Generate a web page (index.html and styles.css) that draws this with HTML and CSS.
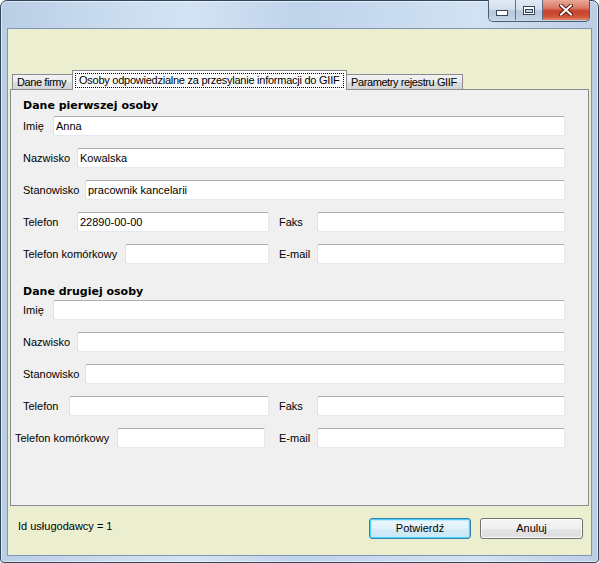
FILE: index.html
```html
<!DOCTYPE html>
<html>
<head>
<meta charset="utf-8">
<link rel="stylesheet" href="styles.css">
</head>
<body>
<div class="window">
  <div class="titlebar">
    <div class="caption">
      <div class="cb cb-min"><svg width="12" height="6" viewBox="0 0 12 6"><rect x="0.5" y="0.5" width="11" height="5" fill="#fff" stroke="#34465c"/></svg></div>
      <div class="cb cb-max"><svg width="12" height="9" viewBox="0 0 12 9"><rect x="0.5" y="0.5" width="11" height="8" fill="#fff" stroke="#34465c"/><rect x="2.5" y="3.5" width="7" height="3" fill="#c9d5e3" stroke="#34465c"/></svg></div>
      <div class="cb cb-close"><svg width="14" height="12" viewBox="0 0 14 12"><path d="M2 1.5 L12 10.5 M12 1.5 L2 10.5" stroke="#5a1a10" stroke-width="4" stroke-linecap="square"/><path d="M2 1.5 L12 10.5 M12 1.5 L2 10.5" stroke="#fff" stroke-width="2" stroke-linecap="square"/></svg></div>
    </div>
  </div>
  <div class="client">
    <div class="top-space"></div>
    <div class="tabs">
      <div class="tab tab-first">Dane firmy</div>
      <div class="tab tab-active"><span class="focus">Osoby odpowiedzialne za przesylanie informacji do GIIF</span></div>
      <div class="tab tab-last">Parametry rejestru GIIF</div>
    </div>
    <div class="panel">
      <div class="section-title first">Dane pierwszej osoby</div>
      <div class="rows">
        <div class="row"><span class="lbl w-imie">Imię</span><div class="field">Anna</div></div>
        <div class="row"><span class="lbl w-naz">Nazwisko</span><div class="field">Kowalska</div></div>
        <div class="row"><span class="lbl w-stan">Stanowisko</span><div class="field">pracownik kancelarii</div></div>
        <div class="row">
          <div class="half"><span class="lbl w-tel1">Telefon</span><div class="field">22890-00-00</div></div>
          <div class="half-r"><span class="lbl w-r">Faks</span><div class="field"></div></div>
        </div>
        <div class="row">
          <div class="half"><span class="lbl w-kom1">Telefon komórkowy</span><div class="field"></div></div>
          <div class="half-r"><span class="lbl w-r">E-mail</span><div class="field"></div></div>
        </div>
      </div>
      <div class="section-title second">Dane drugiej osoby</div>
      <div class="rows">
        <div class="row"><span class="lbl w-imie">Imię</span><div class="field"></div></div>
        <div class="row"><span class="lbl w-naz">Nazwisko</span><div class="field"></div></div>
        <div class="row"><span class="lbl w-stan">Stanowisko</span><div class="field"></div></div>
        <div class="row">
          <div class="half"><span class="lbl w-tel2">Telefon</span><div class="field"></div></div>
          <div class="half-r"><span class="lbl w-r">Faks</span><div class="field"></div></div>
        </div>
        <div class="row">
          <div class="half half-kom2"><span class="lbl w-kom2">Telefon komórkowy</span><div class="field field-kom2"></div></div>
          <div class="half-r"><span class="lbl w-r">E-mail</span><div class="field"></div></div>
        </div>
      </div>
    </div>
    <div class="footer">
      <div class="status">Id usługodawcy = 1</div>
      <div class="buttons">
        <div class="btn btn-default">Potwierdź</div>
        <div class="btn btn-cancel">Anuluj</div>
      </div>
    </div>
  </div>
</div>
</body>
</html>
```
FILE: styles.css
```css
html, body {
  margin: 0;
  padding: 0;
  width: 599px;
  height: 563px;
  overflow: hidden;
  background: #ffffff;
}

body {
  font-family: "Liberation Sans", Arial, sans-serif;
  font-size: 11px;
  color: #000;
}

.window {
  width: 599px;
  height: 563px;
  box-sizing: border-box;
  border: 1px solid #30445a;
  border-radius: 7px 7px 4px 4px;
  background: linear-gradient(90deg, #b9cde4 0%, #c9dcef 18%, #d3e3f3 32%, #bfd3ea 50%, #c8dbef 66%, #d2e2f2 80%, #bacee5 100%);
  box-shadow: inset 0 0 0 1px rgba(255,255,255,0.55);
  padding: 0 6px 6px 6px;
  display: flex;
  flex-direction: column;
}

.titlebar {
  height: 27px;
  display: flex;
  justify-content: flex-end;
  align-items: flex-start;
}

.caption {
  display: flex;
  margin-top: -1px;
  margin-right: 2px;
  height: 21px;
  border: 1px solid #4a5d73;
  border-top: none;
  border-radius: 0 0 5px 5px;
  overflow: hidden;
}

.cb {
  height: 20px;
  display: flex;
  align-items: center;
  justify-content: center;
}

.cb-min, .cb-max {
  width: 26px;
  background: linear-gradient(#e3ebf4 0%, #d3dfec 45%, #b7c8db 55%, #c4d3e4 100%);
  border-right: 1px solid #5c6f86;
}

.cb-min svg {
  margin-top: 6px;
}

.cb-max svg {
  margin-top: 1px;
}

.cb-close {
  width: 46px;
  background: linear-gradient(#e9a797 0%, #dc7a66 40%, #c7412c 55%, #d2553b 85%, #e58a64 100%);
}

.client {
  flex: 1;
  border: 1px solid #8296ae;
  background: #ebefd0;
  display: flex;
  flex-direction: column;
}

.top-space {
  height: 41px;
}

.tabs {
  height: 19px;
  display: flex;
  align-items: flex-end;
  padding-left: 4px;
  position: relative;
  z-index: 1;
}

.tab {
  box-sizing: border-box;
  height: 15px;
  border: 1px solid #898c95;
  border-bottom: none;
  background: linear-gradient(#f2f2f2 0%, #ebebeb 50%, #dddddd 51%, #d4d4d4 100%);
  line-height: 14px;
  letter-spacing: -0.4px;
  white-space: nowrap;
  overflow: hidden;
}

.tab-first {
  width: 60px;
  border-right: none;
  padding-left: 4px;
}

.tab-active {
  width: 275px;
  height: 20px;
  margin-bottom: -1px;
  background: #fbfbfb;
  padding: 2px 2px 0 2px;
  letter-spacing: -0.25px;
}

.focus {
  display: block;
  height: 15px;
  box-sizing: border-box;
  border: 1px dotted #000;
  line-height: 13px;
  padding-left: 3px;
}

.tab-last {
  width: 116px;
  border-left: none;
  padding-left: 4px;
}

.panel {
  margin: 0 2px;
  height: 417px;
  box-sizing: border-box;
  border: 1px solid #898c95;
  background: #f0f0f0;
  padding: 9px 0 0 12px;
}

.section-title {
  font-family: "DejaVu Sans", Verdana, sans-serif;
  font-weight: bold;
  font-size: 11px;
  line-height: 14px;
  height: 14px;
}

.section-title.first {
  margin-bottom: 3px;
}

.section-title.second {
  margin-top: 21px;
  margin-bottom: 1px;
}

.rows {
  display: flex;
  flex-direction: column;
  gap: 12px;
  width: 542px;
}

.row {
  display: flex;
  align-items: center;
  height: 20px;
}

.half {
  display: flex;
  align-items: center;
  width: 246px;
}

.half-kom2 {
  margin-left: -8px;
  width: 254px;
}

.half-r {
  display: flex;
  align-items: center;
  margin-left: 10px;
  flex: 1;
}

.lbl {
  flex: none;
  white-space: nowrap;
}

.w-imie { width: 30px; }
.w-naz { width: 54px; }
.w-stan { width: 62px; }
.w-tel1 { width: 54px; }
.w-tel2 { width: 46px; }
.w-kom1 { width: 102px; }
.w-kom2 { width: 102px; }
.w-r { width: 38px; }

.field {
  flex: 1;
  height: 20px;
  box-sizing: border-box;
  background: #fff;
  border: 1px solid;
  border-color: #abadb3 #e3e9ef #e3e9ef #dbdfe6;
  border-radius: 2px;
  padding: 0 2px;
  line-height: 18px;
  white-space: nowrap;
}

.field-kom2 {
  flex: none;
  width: 148px;
}

.footer {
  flex: 1;
  display: flex;
  justify-content: space-between;
  align-items: flex-start;
  padding: 12px 8px 0 10px;
}

.status {
  margin-top: 2px;
  line-height: 13px;
}

.buttons {
  display: flex;
  gap: 9px;
}

.btn {
  height: 21px;
  box-sizing: border-box;
  border: 1px solid #707070;
  border-radius: 3px;
  background: linear-gradient(#f6f6f6 0%, #efefef 50%, #e5e5e5 51%, #dddddd 100%);
  box-shadow: inset 0 0 0 1px #fbfbfb;
  text-align: center;
  line-height: 19px;
}

.btn-default {
  width: 102px;
  border-color: #3c7fb1;
  box-shadow: inset 0 0 0 1px #49d1f5, inset 0 0 0 2px #bdeefd;
  background: linear-gradient(#eaf6fd 0%, #e2f2fb 50%, #d4ecf8 51%, #c9e6f7 100%);
}

.btn-cancel {
  width: 103px;
}
```
